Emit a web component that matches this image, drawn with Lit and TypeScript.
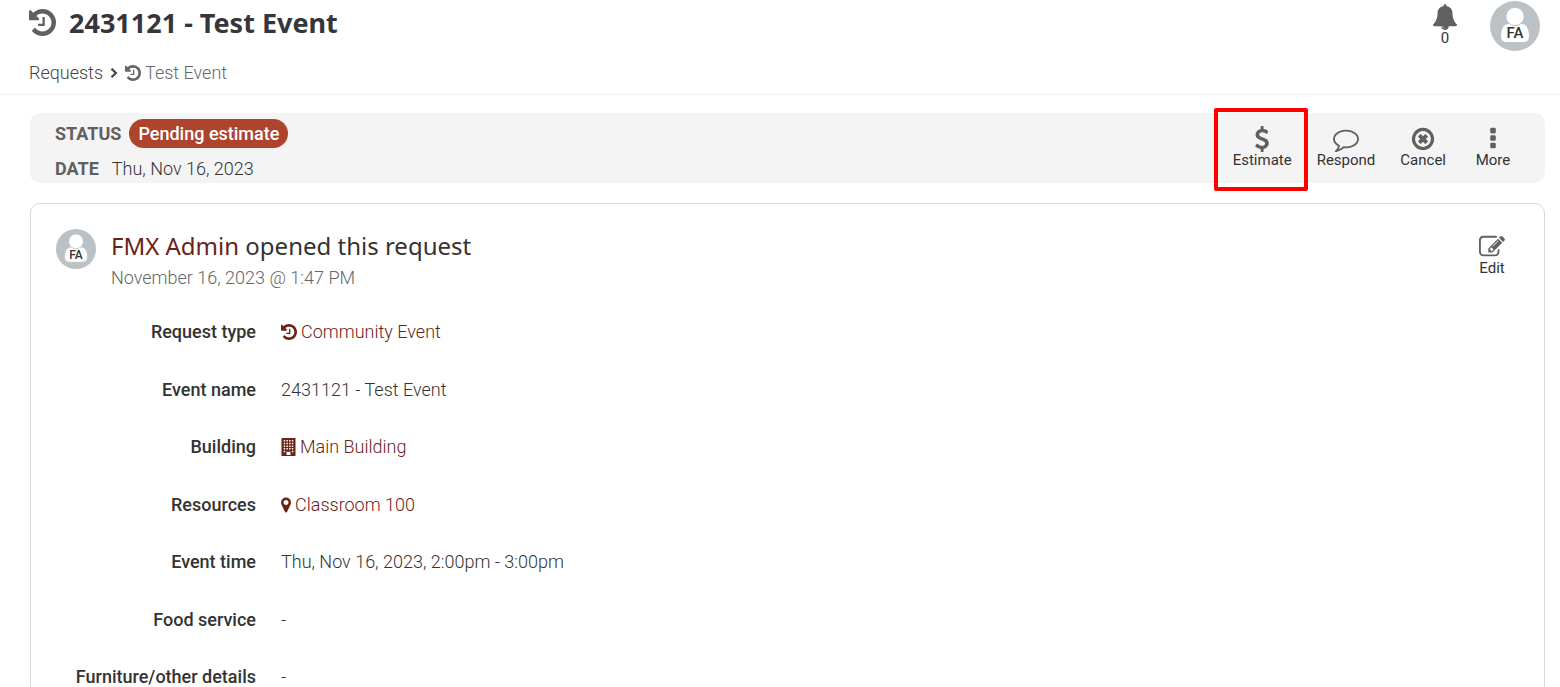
import { LitElement, html, css, svg, nothing } from "lit";
import { customElement, property } from "lit/decorators.js";

const glyphs = {
  history: {
    box: "128 128 1536 1536",
    art: svg`<path d="M1664 896q0 156-61 298t-164 245-245 164-298 61q-172 0-327-72.5t-264-204.5q-7-10-6.5-22.5t8.5-20.5l137-138q10-9 25-9 16 2 23 12 73 95 179 147t225 52q104 0 198.5-40.5t163.5-109.5 109.5-163.5 40.5-198.5-40.5-198.5-109.5-163.5-163.5-109.5-198.5-40.5q-98 0-188 35.5t-160 101.5l137 138q31 30 14 69-17 40-59 40h-448q-26 0-45-19t-19-45v-448q0-42 40-59 39-17 69 14l130 129q107-101 244.5-156.5t284.5-55.5q156 0 298 61t245 164 164 245 61 298zm-640-288v448q0 14-9 23t-23 9h-320q-14 0-23-9t-9-23v-64q0-14 9-23t23-9h224v-352q0-14 9-23t23-9h64q14 0 23 9t9 23z"/>`,
  },
  bell: {
    box: "0 0 1792 1792",
    art: svg`<path d="M912 1696q0-16-16-16-59 0-101.5-42.5t-42.5-101.5q0-16-16-16t-16 16q0 73 51.5 124.5t124.5 51.5q16 0 16-16zm816-288q0 52-38 90t-90 38h-448q0 106-75 181t-181 75-181-75-75-181h-448q-52 0-90-38t-38-90q50-42 91-88t85-119.5 74.5-158.5 50-206 19.5-260q0-152 117-282.5t307-158.5q-8-19-8-39 0-40 28-68t68-28 68 28 28 68q0 20-8 39 190 28 307 158.5t117 282.5q0 139 19.5 260t50 206 74.5 158.5 85 119.5 91 88z"/>`,
  },
  dollar: {
    box: "0 0 1792 1792",
    art: svg`<path d="M1362 1185q0 153-99.5 263.5t-258.5 136.5v175q0 14-9 23t-23 9h-135q-13 0-22.5-9.5t-9.5-22.5v-175q-66-9-127.5-31t-101.5-44.5-74-48-46.5-37.5-17.5-18q-17-21-2-41l103-135q7-10 23-12 15-2 24 9l2 2q113 99 243 125 37 8 74 8 81 0 142.5-43t61.5-122q0-28-15-53t-33.5-42-58.5-37.5-66-32-80-32.5q-39-16-61.5-25t-61.5-26.5-62.5-31-56.5-35.5-53.5-42.5-43.5-49-35.5-58-21-66.5-8.5-78q0-138 98-242t255-134v-180q0-13 9.5-22.5t22.5-9.5h135q14 0 23 9t9 23v176q57 6 110.5 23t87 33.5 63.5 37.5 39 29 15 14q17 18 5 38l-81 146q-8 15-23 16-14 3-27-7-3-3-14.5-12t-39-26.5-58.5-32-74.5-26-85.5-11.5q-95 0-155 43t-60 111q0 26 8.5 48t29.5 41.5 39.5 33 56 31 60.5 27 70 27.5q53 20 81 31.5t76 35 75.5 42.5 62 50 53 63.5 31.5 76.5 13 94z"/>`,
  },
  comment: {
    box: "0 0 1792 1792",
    art: svg`<path d="M896 384q-204 0-381.5 69.5t-282 187.5-104.5 255q0 112 71.5 213.5t201.5 175.5l87 50-27 96q-24 91-70 172 152-63 275-171l43-38 57 6q69 8 130 8 204 0 381.5-69.5t282-187.5 104.5-255-104.5-255-282-187.5-381.5-69.5zm896 512q0 174-120 321.5t-326 233-450 85.5q-70 0-145-8-198 175-460 242-49 14-114 22h-5q-15 0-27-10.5t-16-27.5v-1q-3-4-.5-12t2-10 4.5-9.5l6-9 7-8.5 8-9q7-8 31-34.5t34.5-38 31-39.5 32.5-51 27-59 26-76q-157-89-247.5-220t-90.5-281q0-174 120-321.5t326-233 450-85.5 450 85.5 326 233 120 321.5z"/>`,
  },
  cancel: {
    box: "0 0 1792 1792",
    art: svg`<path d="M1225 1079l-146 146q-10 10-23 10t-23-10l-137-137-137 137q-10 10-23 10t-23-10l-146-146q-10-10-10-23t10-23l137-137-137-137q-10-10-10-23t10-23l146-146q10-10 23-10t23 10l137 137 137-137q10-10 23-10t23 10l146 146q10 10 10 23t-10 23l-137 137 137 137q10 10 10 23t-10 23z"/><path d="M896 352q-148 0-273 73t-198 198-73 273 73 273 198 198 273 73 273-73 198-198 73-273-73-273-198-198-273-73zm768 544q0 209-103 385.5t-279.5 279.5-385.5 103-385.5-103-279.5-279.5-103-385.5 103-385.5 279.5-279.5 385.5-103 385.5 103 279.5 279.5 103 385.5z"/>`,
  },
  more: {
    box: "0 0 1792 1792",
    art: svg`<rect x="704" y="128" width="384" height="384" rx="96"/><rect x="704" y="640" width="384" height="384" rx="96"/><rect x="704" y="1152" width="384" height="384" rx="96"/>`,
  },
  edit: {
    box: "0 0 1792 1792",
    art: svg`<path d="M888 1184l116-116-152-152-116 116v56h96v96h56zm440-720q-16-16-33 1l-350 350q-17 17-1 33t33-1l350-350q17-17 1-33zm80 594v190q0 119-84.5 203.5t-203.5 84.5h-832q-119 0-203.5-84.5t-84.5-203.5v-832q0-119 84.5-203.5t203.5-84.5h832q63 0 117 25 15 7 18 23 3 17-9 29l-49 49q-14 14-32 8-23-6-45-6h-832q-66 0-113 47t-47 113v832q0 66 47 113t113 47h832q66 0 113-47t47-113v-126q0-13 9-22l64-64q15-15 35-7t20 29zm-96-738l288 288-672 672h-288v-288zm444 132l-92 92-288-288 92-92q28-28 68-28t68 28l152 152q28 28 28 68t-28 68z"/>`,
  },
  marker: {
    box: "384 128 1024 1536",
    art: svg`<path d="M1152 640q0-106-75-181t-181-75-181 75-75 181 75 181 181 75 181-75 75-181zm256 0q0 109-33 179l-364 774q-16 33-47.5 52t-67.5 19-67.5-19-46.5-52l-365-774q-33-70-33-179 0-212 150-362t362-150 362 150 150 362z"/>`,
  },
  building: {
    box: "0 0 14 18",
    art: svg`<path fill-rule="evenodd" d="M.5 0h13q.5 0 .5.5v17q0 .5-.5.5H.5q-.5 0-.5-.5V.5Q0 0 .5 0zM2.2 2v1.5h1.5V2zM4.9 2v1.5h1.5V2zM7.6 2v1.5h1.5V2zM10.3 2v1.5h1.5V2zM2.2 4.7v1.5h1.5V4.7zM4.9 4.7v1.5h1.5V4.7zM7.6 4.7v1.5h1.5V4.7zM10.3 4.7v1.5h1.5V4.7zM2.2 7.4v1.5h1.5V7.4zM4.9 7.4v1.5h1.5V7.4zM7.6 7.4v1.5h1.5V7.4zM10.3 7.4v1.5h1.5V7.4zM2.2 10.1v1.5h1.5v-1.5zM4.9 10.1v1.5h1.5v-1.5zM7.6 10.1v1.5h1.5v-1.5zM10.3 10.1v1.5h1.5v-1.5zM2.2 12.8v1.5h1.5v-1.5zM10.3 12.8v1.5h1.5v-1.5zM5 13.8V17h4v-3.2z"/>`,
  },
  chevron: {
    box: "0 0 8 10",
    art: svg`<path d="M1.5 .8l4.4 4.200-4.400 4.200" fill="none" stroke="currentColor" stroke-width="2.2"/>`,
  },
};
type GlyphName = keyof typeof glyphs;

const icon = (name: GlyphName, cls: string) =>
  html`<svg class="icon ${cls}" viewBox=${glyphs[name].box} aria-hidden="true">${glyphs[name].art}</svg>`;

const base = css`
  * { box-sizing: border-box; }
  .icon { display: block; fill: currentColor; flex: none; }
`;

@customElement("user-avatar")
export class UserAvatar extends LitElement {
  @property() initials = "";

  static styles = css`
    :host { display: block; flex: none; width: 50px; height: 50px; }
    :host([small]) { width: 40px; height: 40px; }
    svg { display: block; width: 100%; height: 100%; }
    .disc { fill: #bbc1c4; }
    .body { fill: #fff; stroke: #bbc1c4; }
    text { font: 500 15px Roboto, sans-serif; fill: #333; text-anchor: middle; }
  `;

  render() {
    return html`<svg viewBox="0 0 50 50" role="img" aria-label=${this.initials}>
      <circle class="disc" cx="25" cy="25" r="25" />
      <path class="body" d="M10.500 35c0-7 3-12.500 8-12.500h13c5 0 8 5.500 8 12.500 0 4-2 6.500-6 6.500h-17c-4 0-6-2.500-6-6.500z" />
      <circle class="body" cx="25" cy="15.500" r="9.200" />
      <text x="25" y="37">${this.initials}</text>
    </svg>`;
  }
}

@customElement("icon-action")
export class IconAction extends LitElement {
  @property() icon: GlyphName = "more";
  @property() label = "";
  @property({ type: Boolean }) marked = false;

  static styles = [
    base,
    css`
      :host { display: block; position: relative; }
      .action {
        display: flex;
        flex-direction: column;
        align-items: center;
        min-width: 44px;
        margin: 0;
        padding: 0;
        border: 0;
        background: none;
        color: #333;
        font: 400 15px/16px Roboto, sans-serif;
        cursor: pointer;
      }
      .glyph { width: 26px; height: 26px; color: #606060; }
      .mark {
        position: absolute;
        inset: -18px -16px -23px -19px;
        border: 4px solid #f00;
        border-radius: 2px;
        pointer-events: none;
      }
    `,
  ];

  render() {
    return html`<button class="action" type="button">${icon(this.icon, "glyph")}${this.label}</button>
      ${this.marked ? html`<span class="mark"></span>` : nothing}`;
  }
}

interface Field {
  label: string;
  value: string;
  icon?: GlyphName;
}

const fields: Field[] = [
  { label: "Request type", value: "Community Event", icon: "history" },
  { label: "Event name", value: "2431121 - Test Event" },
  { label: "Building", value: "Main Building", icon: "building" },
  { label: "Resources", value: "Classroom 100", icon: "marker" },
  { label: "Event time", value: "Thu, Nov 16, 2023, 2:00pm - 3:00pm" },
  { label: "Food service", value: "-" },
  { label: "Furniture/other details", value: "-" },
];

@customElement("app-root")
export class AppRoot extends LitElement {
  static styles = [
    base,
    css`
      :host {
        display: block;
        height: 100vh;
        overflow: hidden;
        background: #fff;
        color: #333;
        font: 300 18px/24px Roboto, sans-serif;
      }
      a { color: inherit; text-decoration: none; }
      h1, h2, p, dl, dd, ol { margin: 0; padding: 0; }
      .header {
        display: flex;
        justify-content: space-between;
        height: 95px;
        padding: 0 20px 0 29px;
        border-bottom: 1px solid #f0f0f0;
      }
      .title {
        display: flex;
        align-items: center;
        gap: 13px;
        font: 700 27px/45px "Noto Sans", sans-serif;
        color: #36363a;
      }
      .title-icon { width: 27px; height: 27px; color: #606060; }
      .crumbs {
        display: flex;
        align-items: center;
        gap: 7px;
        margin-top: 16px;
        list-style: none;
        color: #444;
      }
      .crumb { display: flex; align-items: center; gap: 7px; }
      .current { gap: 4px; color: #666; }
      .chevron { width: 8px; height: 10px; }
      .small-icon { width: 16px; height: 16px; }
      .account { display: flex; gap: 32px; padding-top: 1px; }
      .alerts {
        display: flex;
        flex-direction: column;
        align-items: center;
        margin: 0;
        padding: 3px 0 0;
        border: 0;
        background: none;
        color: #333;
        font: 400 15px/16px Roboto, sans-serif;
      }
      .bell { width: 26px; height: 26px; color: #606060; }
      .main { padding: 18px 15px 0 30px; }
      .bar {
        display: flex;
        justify-content: space-between;
        height: 70px;
        padding: 6px 30px 0 25px;
        border-radius: 10px;
        background: #f4f4f4;
      }
      .facts { display: flex; flex-direction: column; gap: 9px; }
      .fact { display: flex; align-items: center; gap: 8px; }
      .date { gap: 13px; }
      .name { font-weight: 700; color: #606060; }
      .pill {
        padding: 0 9px;
        border-radius: 15px;
        background: #ae432e;
        color: #fff;
        font-weight: 500;
        line-height: 29px;
      }
      .actions { display: flex; align-items: flex-start; gap: 25px; padding-top: 7px; }
      .card {
        margin-top: 20px;
        padding: 25px 30px 25px 25px;
        border: 1px solid #d9d9d9;
        border-radius: 10px;
      }
      .top { display: flex; gap: 15px; }
      .opened { flex: 1; }
      .headline { font: 400 24px/34px "Noto Sans", sans-serif; color: #333; }
      .link { color: #6b2217; }
      .when { margin-top: 3px; color: #666; }
      .edit { padding-top: 5px; }
      .fields { margin-top: 31px; line-height: 1.25; }
      .row {
        display: grid;
        grid-template-columns: 200px 1fr;
        column-gap: 25px;
        padding-bottom: 35px;
      }
      .label { text-align: right; font-weight: 500; }
      .value { display: flex; align-items: center; }
      .value .link { display: flex; align-items: center; gap: 4px; }
      .icon-building { width: 15px; height: 18px; }
      .icon-history { width: 16px; height: 16px; }
      .icon-marker { width: 10px; height: 16px; }
    `,
  ];

  private field(f: Field) {
    return html`<div class="row">
      <dt class="label">${f.label}</dt>
      <dd class="value">
        ${f.icon ? html`<a class="link" href="#">${icon(f.icon, `icon-${f.icon}`)}${f.value}</a>` : f.value}
      </dd>
    </div>`;
  }

  render() {
    return html`
      <header class="header">
        <div>
          <h1 class="title">${icon("history", "title-icon")}2431121 - Test Event</h1>
          <ol class="crumbs">
            <li class="crumb"><a href="#">Requests</a>${icon("chevron", "chevron")}</li>
            <li class="crumb current">${icon("history", "small-icon")}Test Event</li>
          </ol>
        </div>
        <div class="account">
          <button class="alerts" type="button" aria-label="Notifications">${icon("bell", "bell")}0</button>
          <user-avatar initials="FA"></user-avatar>
        </div>
      </header>
      <main class="main">
        <section class="bar">
          <div class="facts">
            <div class="fact"><span class="name">STATUS</span><span class="pill">Pending estimate</span></div>
            <div class="fact date"><span class="name">DATE</span><span>Thu, Nov 16, 2023</span></div>
          </div>
          <div class="actions">
            <icon-action icon="dollar" label="Estimate" marked></icon-action>
            <icon-action icon="comment" label="Respond"></icon-action>
            <icon-action icon="cancel" label="Cancel"></icon-action>
            <icon-action icon="more" label="More"></icon-action>
          </div>
        </section>
        <article class="card">
          <div class="top">
            <user-avatar small initials="FA"></user-avatar>
            <div class="opened">
              <h2 class="headline"><a class="link" href="#">FMX Admin</a> opened this request</h2>
              <p class="when">November 16, 2023 @ 1:47 PM</p>
            </div>
            <icon-action class="edit" icon="edit" label="Edit"></icon-action>
          </div>
          <dl class="fields">${fields.map((f) => this.field(f))}</dl>
        </article>
      </main>
    `;
  }
}
